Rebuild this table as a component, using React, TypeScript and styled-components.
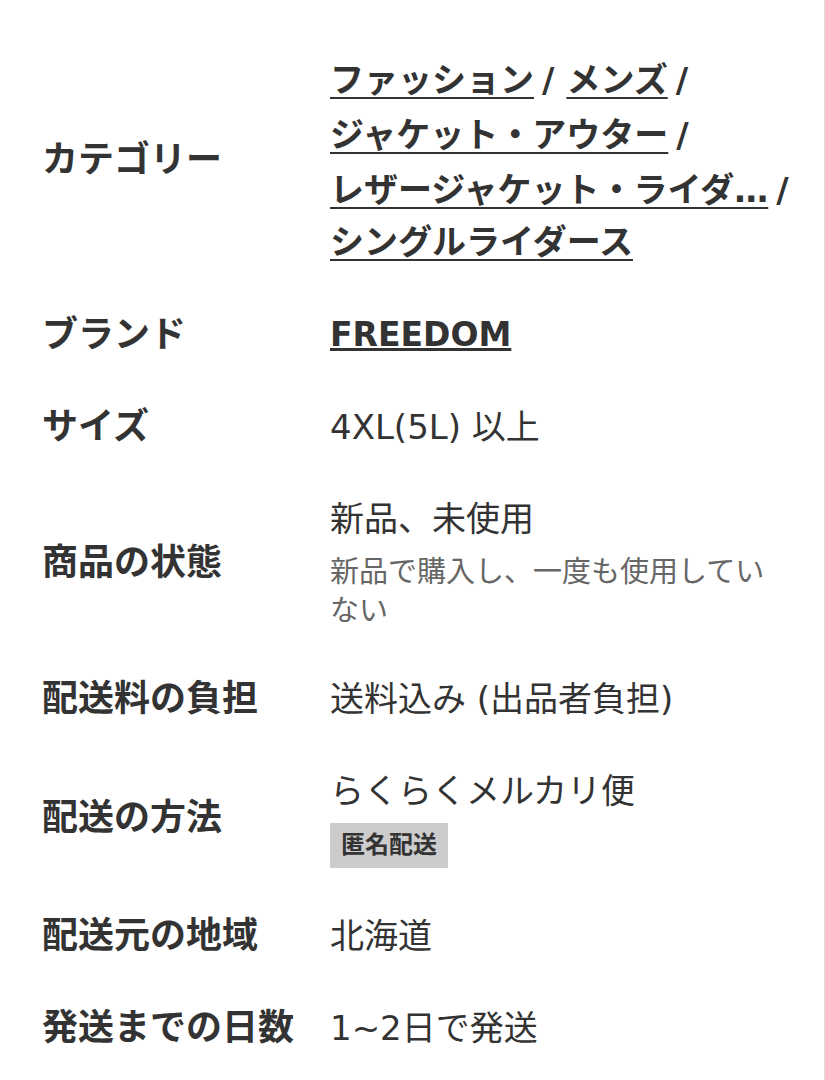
import React from "react";
import styled, { createGlobalStyle } from "styled-components";

const GlobalStyle = createGlobalStyle`
  html, body {
    margin: 0;
    padding: 0;
    background: #ffffff;
  }
  * { box-sizing: border-box; }
`;

const FONT = `"DejaVu Sans", "Noto Sans CJK JP", sans-serif`;

const Page = styled.div`
  width: 825px;
  min-height: 1080px;
  padding: 31px 25px 0 42px;
  border-right: 1px solid #dcdcdc;
  font-family: ${FONT};
  color: #333333;
  background: #ffffff;
`;

const Row = styled.div`
  display: grid;
  grid-template-columns: 288px 1fr;
  align-items: center;
  padding: 22px 0;
`;

const Label = styled.div`
  font-size: 36px;
  font-weight: 700;
  line-height: 48px;
  white-space: nowrap;
  color: #333333;
`;

const Value = styled.div`
  display: flex;
  flex-direction: column;
  align-items: flex-start;
`;

const Text = styled.div`
  font-size: 34px;
  font-weight: 400;
  line-height: 48px;
  color: #333333;
  white-space: nowrap;
`;

const Note = styled.div`
  margin-top: 10px;
  max-width: 450px;
  font-size: 29px;
  line-height: 39px;
  color: #666666;
`;

const Crumbs = styled.div`
  display: flex;
  flex-wrap: wrap;
  column-gap: 12px;
`;

const Crumb = styled.span`
  white-space: nowrap;
  font-size: 34px;
  font-weight: 700;
  line-height: 48px;
`;

const CrumbLink = styled.a<{ $latin?: boolean }>`
  color: #333333;
  font-size: ${(p) => (p.$latin ? "33px" : "inherit")};
  text-decoration: underline;
  text-decoration-thickness: ${(p) => (p.$latin ? "3px" : "2px")};
  text-underline-offset: ${(p) => (p.$latin ? "2px" : "5px")};
  cursor: pointer;
`;

const Sep = styled.span`
  margin-left: 8px;
  line-height: 55px;
  color: #333333;
`;

const Chip = styled.span`
  margin-top: 8px;
  display: inline-block;
  padding: 0 11px;
  height: 45px;
  line-height: 45px;
  background: #cccccc;
  color: #333333;
  font-size: 24px;
  font-weight: 700;
`;

const categories = [
  "ファッション",
  "メンズ",
  "ジャケット・アウター",
  "レザージャケット・ライダ…",
  "シングルライダース",
];

export default function App() {
  return (
    <>
      <GlobalStyle />
      <Page>
        <Row>
          <Label>カテゴリー</Label>
          <Crumbs>
            {categories.map((c, i) => (
              <Crumb key={c}>
                <CrumbLink>{c}</CrumbLink>
                {i < categories.length - 1 && <Sep>/</Sep>}
              </Crumb>
            ))}
          </Crumbs>
        </Row>
        <Row>
          <Label>ブランド</Label>
          <Crumbs>
            <Crumb>
              <CrumbLink $latin>FREEDOM</CrumbLink>
            </Crumb>
          </Crumbs>
        </Row>
        <Row>
          <Label>サイズ</Label>
          <Value>
            <Text>4XL(5L) 以上</Text>
          </Value>
        </Row>
        <Row>
          <Label>商品の状態</Label>
          <Value>
            <Text>新品、未使用</Text>
            <Note>新品で購入し、一度も使用していない</Note>
          </Value>
        </Row>
        <Row>
          <Label>配送料の負担</Label>
          <Value>
            <Text>送料込み (出品者負担)</Text>
          </Value>
        </Row>
        <Row>
          <Label>配送の方法</Label>
          <Value>
            <Text>らくらくメルカリ便</Text>
            <Chip>匿名配送</Chip>
          </Value>
        </Row>
        <Row>
          <Label>配送元の地域</Label>
          <Value>
            <Text>北海道</Text>
          </Value>
        </Row>
        <Row>
          <Label>発送までの日数</Label>
          <Value>
            <Text>1~2日で発送</Text>
          </Value>
        </Row>
      </Page>
    </>
  );
}
